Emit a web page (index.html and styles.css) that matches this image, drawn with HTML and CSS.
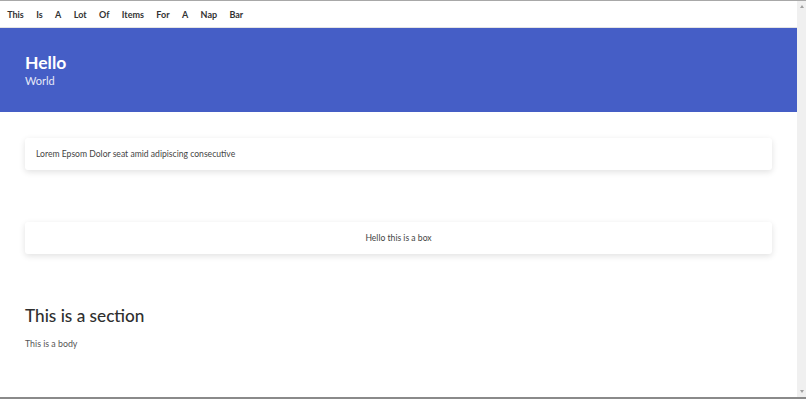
FILE: index.html
```html
<!DOCTYPE html>
<html lang="en">
<head>
    <meta charset="UTF-8">
    <meta name="viewport" content="width=device-width, initial-scale=1.0">
    <title>Hello World</title>
    <link rel="stylesheet" href="styles.css">
</head>
<body>
    <div class="window">
        <div class="page">
            <nav class="navbar">
                <a href="#">This</a>
                <a href="#">Is</a>
                <a href="#">A</a>
                <a href="#">Lot</a>
                <a href="#">Of</a>
                <a href="#">Items</a>
                <a href="#">For</a>
                <a href="#">A</a>
                <a href="#">Nap</a>
                <a href="#">Bar</a>
            </nav>

            <header class="hero">
                <h1>Hello</h1>
                <p>World</p>
            </header>

            <main class="content">
                <div class="card">Lorem Epsom Dolor seat amid adipiscing consecutive</div>
                <div class="card card-center">Hello this is a box</div>

                <section class="section">
                    <h2>This is a section</h2>
                    <p>This is a body</p>
                </section>
            </main>
        </div>
        <div class="scrollbar">
            <span class="arrow arrow-up"></span>
            <span class="arrow arrow-down"></span>
        </div>
    </div>
</body>
</html>
```

FILE: styles.css
```css
body {
    margin: 0;
    font-family: Lato, "Open Sans", sans-serif;
    color: #333;
    background-color: #fff;
}

.window {
    display: flex;
    height: 399px;
    box-sizing: border-box;
    border-top: 1px solid #a8a8a8;
    border-bottom: 2px solid #8a8a8a;
    overflow: hidden;
}

.page {
    flex: 1;
    min-width: 0;
}

.navbar {
    display: flex;
    height: 26px;
    align-items: center;
    padding-left: 1px;
    border-bottom: 1px solid #e4e4e4;
}

.navbar a {
    padding: 0 6.2px;
    font-size: 9px;
    font-weight: 700;
    color: #333;
    text-decoration: none;
}

.hero {
    background-color: #455ec6;
    color: #fff;
    padding: 24px 25px 0;
    height: 84px;
    box-sizing: border-box;
}

.hero h1 {
    margin: 0;
    font-size: 17.5px;
    font-weight: 700;
    line-height: 22px;
}

.hero p {
    margin: 0;
    font-size: 11px;
    line-height: 14px;
    color: #e6e9f8;
}

.content {
    padding: 26px 25px 0 25px;
}

.card {
    height: 32px;
    display: flex;
    align-items: center;
    padding: 0 11px;
    font-size: 8.6px;
    color: #444;
    background-color: #fff;
    border-radius: 3px;
    box-shadow: 0 2px 6px rgba(0, 0, 0, 0.12);
    margin-bottom: 52px;
}

.card-center {
    justify-content: center;
}

.section h2 {
    margin: 0;
    font-size: 17.2px;
    font-weight: 500;
    line-height: 20px;
    color: #2f2f2f;
}

.section p {
    margin: 12px 0 0;
    font-size: 8.8px;
    color: #555;
}

.scrollbar {
    width: 9px;
    background-color: #f0f0f0;
    display: flex;
    flex-direction: column;
    justify-content: space-between;
    align-items: center;
    padding: 4px 0;
}

.arrow {
    width: 0;
    height: 0;
    border-left: 2px solid transparent;
    border-right: 2px solid transparent;
}

.arrow-up {
    border-bottom: 3px solid #a0a0a0;
}

.arrow-down {
    border-top: 3px solid #a0a0a0;
}
```
